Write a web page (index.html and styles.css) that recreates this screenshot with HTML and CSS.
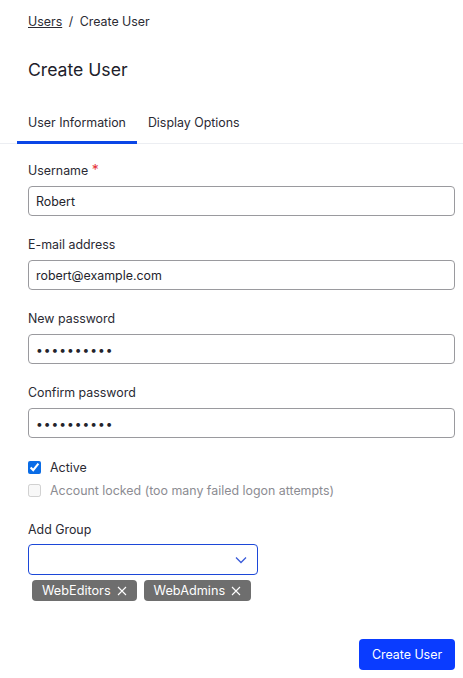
FILE: index.html
```html
<!DOCTYPE html>
<html lang="en">
<head>
  <meta charset="UTF-8" />
  <meta name="viewport" content="width=device-width, initial-scale=1.0">
  <title>Create User</title>
  <link rel="stylesheet" href="styles.css">
</head>
<body>
  <nav class="crumbs"><a href="#">Users</a> <span class="sep">/</span> Create User</nav>
  <h1>Create User</h1>

  <div class="tabs">
    <div class="tab active">User Information</div>
    <div class="tab">Display Options</div>
  </div>

  <form class="form">
    <div class="field">
      <label>Username <span class="req">*</span></label>
      <input type="text" value="Robert">
    </div>
    <div class="field">
      <label>E-mail address</label>
      <input type="text" value="robert@example.com">
    </div>
    <div class="field">
      <label>New password</label>
      <input type="password" value="secret1234">
    </div>
    <div class="field">
      <label>Confirm password</label>
      <input type="password" value="secret1234">
    </div>

    <div class="checks">
      <label class="check"><input type="checkbox" checked> Active</label>
      <label class="check disabled"><input type="checkbox" disabled> Account locked (too many failed logon attempts)</label>
    </div>

    <div class="field group">
      <label>Add Group</label>
      <div class="select">
        <svg width="12" height="8" viewBox="0 0 12 8"><path d="M1 1.5l5 5 5-5" fill="none" stroke="#3a5bd9" stroke-width="1.3"/></svg>
      </div>
      <div class="chips">
        <span class="chip">WebEditors <svg class="x" width="10" height="10" viewBox="0 0 10 10"><path d="M1 1l8 8M9 1l-8 8" stroke="#fff" stroke-width="1.1"/></svg></span>
        <span class="chip">WebAdmins <svg class="x" width="10" height="10" viewBox="0 0 10 10"><path d="M1 1l8 8M9 1l-8 8" stroke="#fff" stroke-width="1.1"/></svg></span>
      </div>
    </div>

    <div class="actions">
      <button type="button">Create User</button>
    </div>
  </form>
</body>
</html>
```

FILE: styles.css
```css
body { margin: 0; font-family: Inter, "Noto Sans", sans-serif; font-size: 12.4px; color: #23232b; background: #fff; }
.crumbs { padding: 14px 28px 0; line-height: 16px; color: #2b2b33; }
.crumbs a { color: #2b2b33; text-decoration: underline; }
.crumbs .sep { margin: 0 3px; }
h1 { margin: 0; padding: 0 28px; margin-top: 28px; font-size: 17.6px; font-weight: 400; line-height: 24px; color: #20202a; }
.tabs { display: flex; margin-top: 33px; padding-left: 17px; border-bottom: 1px solid #eceef2; }
.tab { padding: 0 11px 10px; line-height: 16px; margin-bottom: -1px; border-bottom: 3px solid transparent; color: #2a2a33; }
.tab.active { border-bottom-color: #0a46e6; }
.form { padding: 0 8px 0 28px; }
.field { margin-top: 18px; }
.field + .field { margin-top: 21px; }
.field label { display: block; line-height: 16px; margin-bottom: 7px; color: #2a2a33; }
.req { color: #e5343a; font-size: 14px; }
.field input { box-sizing: border-box; width: 427px; height: 30px; padding: 0 7px; border: 1px solid #9a9a9e; border-radius: 4px; font-family: inherit; font-size: 12.4px; color: #23232b; }
.field input[type="password"] { letter-spacing: 1px; font-size: 12px; }
.checks { margin-top: 18px; }
.check { display: flex; align-items: center; gap: 9px; line-height: 23px; color: #2a2a33; }
.check input { margin: 0; width: 13px; height: 13px; accent-color: #0a6ce6; }
.check.disabled { color: #8c8c92; }
.field.group { margin-top: 20px; }
.select { box-sizing: border-box; width: 230px; height: 31px; border: 1px solid #1c48d8; border-radius: 4px; display: flex; align-items: center; justify-content: flex-end; padding-right: 10px; margin-top: -1px; }
.chips { display: flex; gap: 7px; margin-top: 5px; padding-left: 4px; }
.chip { display: inline-flex; align-items: center; gap: 6px; background: #6e6e6e; color: #fff; border-radius: 4px; padding: 0 10px 0 10px; line-height: 21px; font-size: 12.7px; }
.actions { display: flex; justify-content: flex-end; width: 427px; margin-top: 38px; }
button { width: 96px; height: 31px; border: none; border-radius: 4px; background: #0a3cff; color: #fff; font-family: inherit; font-size: 12.4px; cursor: pointer; }
```
